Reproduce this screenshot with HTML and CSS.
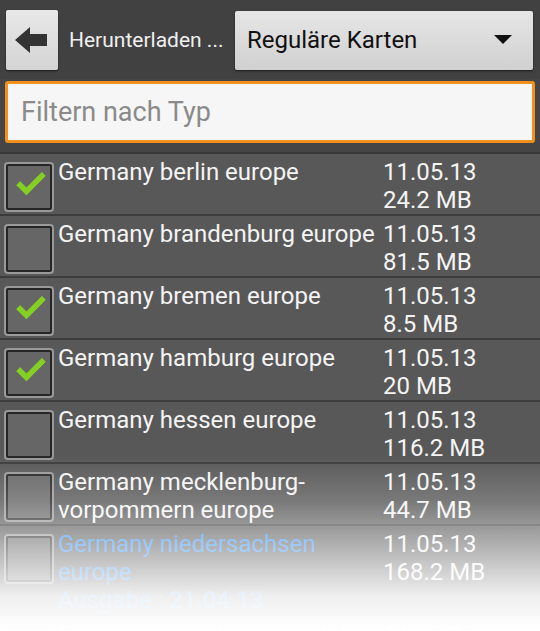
FILE: index.html
```html
<!DOCTYPE html>
<html lang="de">
<head>
    <meta charset="UTF-8">
    <meta name="viewport" content="width=device-width, initial-scale=1.0">
    <title>Herunterladen</title>
    <link rel="stylesheet" href="styles.css">
</head>
<body>
    <div class="screen">
        <div class="top-bar">
            <button class="back-btn">
                <svg width="34" height="26" viewBox="0 0 34 26">
                    <polygon points="0,13 15,0 15,7 32,7 32,19 15,19 15,26" fill="#333"/>
                </svg>
            </button>
            <span class="title">Herunterladen ...</span>
            <button class="spinner">
                <span>Reguläre Karten</span>
                <svg width="18" height="10" viewBox="0 0 18 10">
                    <polygon points="0,0 18,0 9,9" fill="#111"/>
                </svg>
            </button>
        </div>

        <div class="search-bar">
            <input type="text" class="search" placeholder="Filtern nach Typ">
        </div>

        <div class="list">
            <div class="row">
                <span class="check on"></span>
                <div class="name">Germany berlin europe</div>
                <div class="info">11.05.13<br>24.2 MB</div>
            </div>
            <div class="row">
                <span class="check"></span>
                <div class="name">Germany brandenburg europe</div>
                <div class="info">11.05.13<br>81.5 MB</div>
            </div>
            <div class="row">
                <span class="check on"></span>
                <div class="name">Germany bremen europe</div>
                <div class="info">11.05.13<br>8.5 MB</div>
            </div>
            <div class="row">
                <span class="check on"></span>
                <div class="name">Germany hamburg europe</div>
                <div class="info">11.05.13<br>20 MB</div>
            </div>
            <div class="row">
                <span class="check"></span>
                <div class="name">Germany hessen europe</div>
                <div class="info">11.05.13<br>116.2 MB</div>
            </div>
            <div class="row">
                <span class="check"></span>
                <div class="name">Germany mecklenburg-<br>vorpommern europe</div>
                <div class="info">11.05.13<br>44.7 MB</div>
            </div>
            <div class="row">
                <span class="check"></span>
                <div class="name outdated">Germany niedersachsen<br>europe<br>Ausgabe : 21.04.13</div>
                <div class="info">11.05.13<br>168.2 MB</div>
            </div>
            <div class="row">
                <span class="check"></span>
                <div class="name">Germany nordrhein-westfalen</div>
                <div class="info">11.05.13<br>168.2 MB</div>
            </div>
        </div>

        <div class="fade"></div>
    </div>
</body>
</html>
```

FILE: styles.css
```css
/* Android style download list */
body {
    margin: 0;
    font-family: Roboto, "Liberation Sans", sans-serif;
    background: #585858;
}
.screen {
    position: relative;
    width: 540px;
    height: 631px;
    overflow: hidden;
    background: #585858;
}
.top-bar {
    display: flex;
    align-items: center;
    height: 79px;
    padding: 0 7px 0 6px;
    box-sizing: border-box;
    background: #414141;
}
.back-btn {
    display: flex;
    align-items: center;
    justify-content: center;
    width: 52px;
    height: 60px;
    padding: 0;
    border: none;
    border-radius: 2px;
    background: linear-gradient(#e8e8e8, #d4d4d4);
    box-shadow: 0 1px 2px rgba(0, 0, 0, 0.6);
}
.title {
    flex: 1;
    margin-left: 11px;
    color: #f0f0f0;
    font-size: 21px;
    white-space: nowrap;
}
.spinner {
    display: flex;
    align-items: center;
    justify-content: space-between;
    width: 298px;
    height: 59px;
    margin-top: 1px;
    padding: 0 21px 0 12px;
    border: none;
    border-radius: 2px;
    background: linear-gradient(#e6e6e6, #d0d0d0);
    box-shadow: 0 1px 2px rgba(0, 0, 0, 0.6);
    font-family: Roboto, "Liberation Sans", sans-serif;
    font-size: 24px;
    color: #111;
}
.search-bar {
    padding: 2px 5px 9px;
    background: #454545;
}
.search {
    display: block;
    width: 100%;
    height: 62px;
    box-sizing: border-box;
    padding: 0 13px;
    border: 3px solid #f1901e;
    border-radius: 3px;
    background: #f6f6f6;
    font-family: Roboto, "Liberation Sans", sans-serif;
    font-size: 27px;
    outline: none;
}
.search::placeholder {
    color: #8a8a8a;
}
.list {
    border-top: 2px solid #383838;
}
.row {
    display: flex;
    padding: 4px 0 0 6px;
    border-bottom: 2px solid #3c3c3c;
    color: #f4f4f4;
    font-size: 24px;
    line-height: 28px;
}
.check {
    flex: none;
    width: 42px;
    height: 42px;
    margin-top: 6px;
    border: 2px solid #262626;
    border-radius: 2px;
    background: #666;
    box-shadow: 0 0 0 2px #999;
    position: relative;
}
.check.on::after {
    content: "";
    position: absolute;
    left: 9px;
    top: 7px;
    width: 22px;
    height: 9px;
    border-left: 6px solid #84cf24;
    border-bottom: 6px solid #84cf24;
    transform: rotate(-45deg);
    border-radius: 1px;
}
.name {
    width: 331px;
    padding-left: 6px;
    box-sizing: border-box;
    white-space: nowrap;
}
.name.outdated {
    color: #2f8ff0;
}
.info {
    white-space: nowrap;
}
.fade {
    position: absolute;
    left: 0;
    right: 0;
    bottom: 0;
    height: 176px;
    background: linear-gradient(rgba(255, 255, 255, 0), rgba(255, 255, 255, 0.2) 26%, rgba(255, 255, 255, 0.62) 58%, rgba(255, 255, 255, 0.9) 80%, rgba(255, 255, 255, 0.97) 92%, #fff);
    pointer-events: none;
}
```
